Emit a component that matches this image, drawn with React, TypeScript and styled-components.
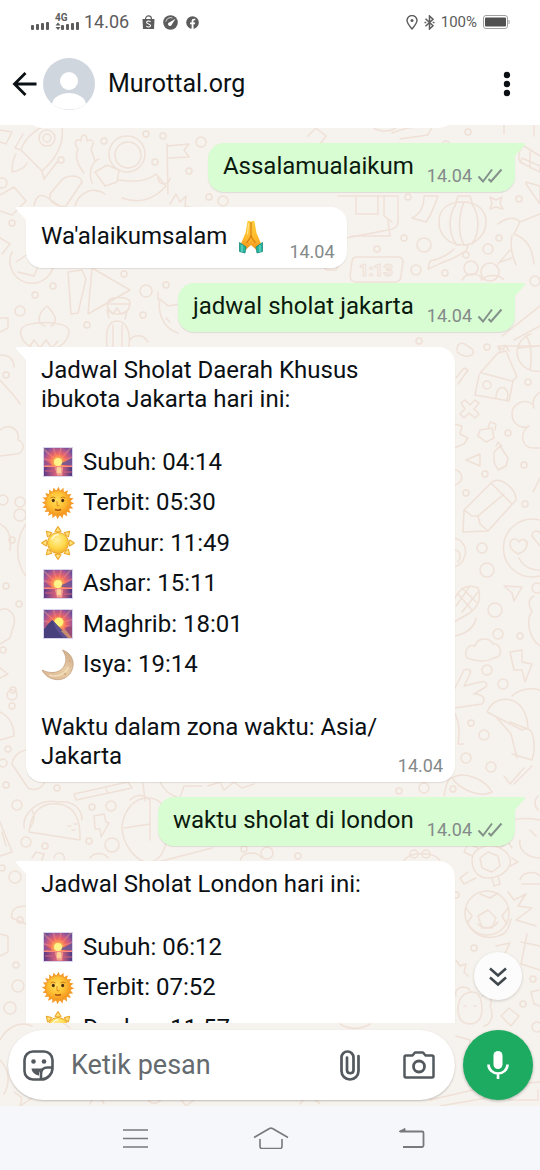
import React from "react";
import styled, { createGlobalStyle, css } from "styled-components";

const GlobalStyle = createGlobalStyle`
  *, *::before, *::after { box-sizing: border-box; }
  body { margin: 0; background: #ffffff; font-family: Roboto, "Liberation Sans", sans-serif; color: #0b1014; }
  button, input { font: inherit; color: inherit; border: 0; padding: 0; background: none; }
  h1, p, ul { margin: 0; padding: 0; }
  ul { list-style: none; }
  svg { display: block; flex: none; }
`;

const Screen = styled.div`
  display: flex;
  flex-direction: column;
  height: 100vh;
  overflow: hidden;
`;

const StatusBar = styled.div`
  display: flex;
  align-items: center;
  justify-content: space-between;
  height: 44px;
  flex: none;
  padding: 0 30px;
  color: #5c5c5c;
`;

const StatusGroup = styled.div<{ $gap: number }>`
  display: flex;
  align-items: center;
  gap: ${(p) => p.$gap}px;
`;

const AppIcons = styled(StatusGroup)`
  margin-left: 8px;
`;

const StatusText = styled.span<{ $size: number }>`
  font-size: ${(p) => p.$size}px;
  line-height: 20px;
`;

const Header = styled.header`
  display: flex;
  align-items: center;
  height: 81px;
  flex: none;
  padding: 0 25px 2px 12px;
`;

const IconButton = styled.button`
  display: flex;
  align-items: center;
  justify-content: center;
  flex: none;
  cursor: pointer;
`;

const AvatarSvg = styled.svg`
  margin-left: 5px;
`;

const Title = styled.h1`
  flex: 1;
  margin-left: 13px;
  font-size: 25px;
  line-height: 30px;
  font-weight: 400;
`;

const Chat = styled.main`
  position: relative;
  display: flex;
  flex-direction: column;
  flex: 1;
  min-height: 0;
  background: #f6f2ed;
`;

const WallpaperSvg = styled.svg`
  position: absolute;
  inset: 0;
  width: 100%;
  height: 100%;
`;

const Messages = styled.section`
  position: relative;
  display: flex;
  flex-direction: column;
  gap: 15px;
  flex: 1;
  min-height: 0;
  overflow: hidden;
  padding: 0 25px 0 26px;
`;

const Earlier = styled.div`
  display: flex;
  align-items: flex-end;
  flex: none;
  width: calc(100% - 60px);
  height: 3px;
  overflow: hidden;
`;

const EarlierBubble = styled.div`
  flex: 1;
  height: 40px;
  border-radius: 16px;
  background: #ffffff;
`;

const Bubble = styled.article<{ $out?: boolean; $wide?: boolean }>`
  position: relative;
  display: flex;
  align-items: flex-end;
  justify-content: space-between;
  gap: 13px;
  flex: none;
  padding: 9px 12px 6px 15px;
  box-shadow: 0 1px 1px rgba(60, 50, 40, 0.12);
  ${(p) =>
    p.$out
      ? css`
          align-self: flex-end;
          background: #d8fdd2;
          color: #0a1a0e;
          border-radius: 16px 0 16px 16px;
        `
      : css`
          align-self: flex-start;
          background: #ffffff;
          border-radius: 0 16px 16px 16px;
        `}
  ${(p) => p.$wide && "width: calc(100% - 60px);"}
`;

const TailSvg = styled.svg<{ $out?: boolean }>`
  position: absolute;
  top: 0;
  ${(p) => (p.$out ? "right: -10px; transform: scaleX(-1);" : "left: -10px;")}
`;

const Body = styled.div`
  margin-bottom: 5px;
  font-size: 24px;
  line-height: 29px;
`;

const EmojiLine = styled.p`
  display: flex;
  align-items: center;
  gap: 7px;
  height: 41px;
  margin-right: 8px;
`;

const Times = styled.ul`
  display: grid;
  grid-template-rows: repeat(6, 1fr);
  height: 243px;
  margin: 28px 0;
`;

const TimeRow = styled.li`
  display: flex;
  align-items: center;
  gap: 8px;
`;

const Stamp = styled.footer`
  display: flex;
  align-items: center;
  gap: 5px;
  flex: none;
  font-size: 18px;
  line-height: 20px;
  color: #84898a;
`;

const ScrollButton = styled(IconButton)`
  position: absolute;
  right: 18px;
  bottom: 106px;
  width: 48px;
  height: 48px;
  border-radius: 50%;
  background: #fbfcfb;
  color: #3f474c;
  box-shadow: 0 1px 3px rgba(60, 50, 40, 0.2);
`;

const Composer = styled.form`
  position: relative;
  display: flex;
  gap: 8px;
  flex: none;
  padding: 7px 7px 6px 8px;
`;

const InputPill = styled.div`
  display: flex;
  align-items: center;
  flex: 1;
  min-width: 0;
  height: 70px;
  padding: 0 20px 0 15px;
  border-radius: 35px;
  background: #ffffff;
  color: #53595e;
  box-shadow: 0 1px 2px rgba(60, 50, 40, 0.28);
`;

const MessageInput = styled.input`
  flex: 1;
  min-width: 0;
  margin: 0 17px;
  font-size: 27px;
  line-height: 32px;
  outline: none;
  &::placeholder {
    color: #646a6e;
    opacity: 1;
  }
`;

const PillActions = styled.div`
  display: flex;
  align-items: center;
  gap: 42px;
`;

const MicButton = styled(IconButton)`
  width: 70px;
  height: 70px;
  border-radius: 50%;
  background: #1dab61;
  color: #ffffff;
  box-shadow: 0 1px 3px rgba(40, 50, 40, 0.35);
`;

const NavBar = styled.nav`
  display: flex;
  align-items: center;
  justify-content: space-between;
  height: 64px;
  flex: none;
  padding: 0 115px 0 122px;
  background: #f6f7fa;
  color: #77797c;
`;

/* ---------- status icons ---------- */

const bars = (x: number) =>
  [0, 1, 2, 3].map((i) => (
    <rect key={i} x={x + i * 5} y={12 - i} width="3" height={5 + i} rx="1" />
  ));

const Signal = () => (
  <svg width="49" height="18" viewBox="-1 0 49 18" fill="currentColor" aria-hidden="true">
    {bars(0)}
    <text x="24" y="8" fontSize="10" fontWeight="700" fontFamily="Roboto, sans-serif">4G</text>
    {bars(30)}
    <path d="M24.500 12.500l2.500-3 2.500 3zM24.500 14l2.500 3 2.500-3z" />
  </svg>
);

const ShopIcon = () => (
  <svg width="13" height="15" viewBox="0 0 13 15" aria-hidden="true">
    <path d="M3.500 4.500C3.500-.3 9.500-.3 9.500 4.500" fill="none" stroke="currentColor" strokeWidth="1.200" />
    <path d="M.5 4h12L12 14H1z" fill="currentColor" />
    <path d="M8.600 6.800C7 5.500 4.500 6 4.600 7.500c.1 1.700 4 1.200 4 3 0 1.700-2.800 1.900-4.300.6" fill="none" stroke="#fff" strokeWidth="1.100" />
  </svg>
);

const GaugeIcon = () => (
  <svg width="15" height="15" viewBox="0 0 15 15" aria-hidden="true">
    <circle cx="7.500" cy="7.500" r="7.300" fill="currentColor" />
    <path d="M2.800 6.500A5 5 0 0 1 9.500 3" fill="none" stroke="#fff" strokeWidth=".8" />
    <path d="M12.500 3.800L8.700 9.800a1.900 1.900 0 1 1-2-2.500z" fill="#fff" />
  </svg>
);

const FacebookIcon = () => (
  <svg width="13" height="13" viewBox="0 0 13 13" aria-hidden="true">
    <circle cx="6.500" cy="6.500" r="6.300" fill="currentColor" />
    <path d="M5.600 13V8.300H4V6.500h1.600V5.200c0-1.700 1-2.500 2.500-2.500l1.200.1v1.500h-.8c-.8 0-1 .4-1 1v1.200h1.700l-.3 1.800H7.500V13z" fill="#fff" />
  </svg>
);

const PinIcon = () => (
  <svg width="12" height="15" viewBox="0 0 12 15" fill="none" stroke="currentColor" strokeWidth="1.400" aria-hidden="true">
    <path d="M6 14C3 10.500 1 8 1 5.600a5 5 0 0 1 10 0C11 8 9 10.500 6 14z" />
    <circle cx="6" cy="5.500" r="1.500" fill="currentColor" stroke="none" />
  </svg>
);

const BluetoothIcon = () => (
  <svg width="11" height="15" viewBox="0 0 11 15" fill="none" stroke="currentColor" strokeWidth="1.500" aria-hidden="true">
    <path d="M1.500 3.800L9 10.800 5.500 14V1L9 4.200l-7.500 7" />
    <path d="M.5 7.500h1.800M8.700 7.500h1.800" />
  </svg>
);

const BatteryIcon = () => (
  <svg width="27" height="14" viewBox="0 0 27 14" aria-hidden="true">
    <rect x=".5" y=".5" width="24" height="13" rx="2.500" fill="none" stroke="#a0a0a0" />
    <rect x="2" y="2.500" width="21" height="9" rx="1" fill="#505050" />
    <path d="M26 5v4" stroke="#a0a0a0" />
  </svg>
);

/* ---------- app icons ---------- */

const BackIcon = () => (
  <svg width="26" height="26" viewBox="0 0 26 26" fill="none" stroke="#0b1014" strokeWidth="2.800" aria-hidden="true">
    <path d="M24.500 13H3M13.500 2L2.500 13l11 11" />
  </svg>
);

const Avatar = () => (
  <AvatarSvg width="52" height="52" viewBox="0 0 52 52" aria-hidden="true">
    <clipPath id="avatar"><circle cx="26" cy="26" r="26" /></clipPath>
    <g clipPath="url(#avatar)">
      <rect width="52" height="52" fill="#cfd6dd" />
      <circle cx="26" cy="23" r="9" fill="#fff" />
      <path d="M9 46c1-7 9-11 17-11s16 4 17 11c-4 3.500-10 5.500-17 5.500S13 49.500 9 46z" fill="#fff" />
    </g>
  </AvatarSvg>
);

const DotsIcon = () => (
  <svg width="16" height="28" viewBox="0 0 16 28" fill="#0b1014" aria-hidden="true">
    <circle cx="8" cy="5" r="3.200" />
    <circle cx="8" cy="14" r="3.200" />
    <circle cx="8" cy="23" r="3.200" />
  </svg>
);

const ChecksIcon = () => (
  <svg width="26" height="18" viewBox="0 0 26 18" fill="none" stroke="#83918a" strokeWidth="2" aria-hidden="true">
    <path d="M1.500 9.500l4.500 5L15 2.500" />
    <path d="M11.500 12l2.500 2.500L24.500 2.500" />
  </svg>
);

const Tail = ({ out }: { out?: boolean }) => (
  <TailSvg $out={out} width="11" height="16" viewBox="0 0 11 16" aria-hidden="true">
    <path d="M11 0H1.500C0 0-.4 1.400.6 2.400L10 13v3h1z" fill={out ? "#d8fdd2" : "#ffffff"} />
  </TailSvg>
);

const StickerIcon = () => (
  <svg width="31" height="31" viewBox="0 0 31 31" fill="none" stroke="currentColor" strokeWidth="2.600" strokeLinejoin="round" aria-hidden="true">
    <path d="M10 1.500h11a8.500 8.500 0 0 1 8.500 8.500v8c0 6-5 11.500-11.500 11.500h-8A8.500 8.500 0 0 1 1.500 21V10A8.500 8.500 0 0 1 10 1.500z" />
    <path d="M29.500 17.500h-5c-4 0-6.500 2.500-6.500 6.500v5.500" />
    <path d="M8.500 18.500h13c-4 1-5.500 3.500-5.500 7-4-.5-7-3-7.500-7z" fill="currentColor" stroke="none" />
    <circle cx="10.500" cy="11.500" r="2.300" fill="currentColor" stroke="none" />
    <circle cx="21" cy="11.500" r="2.300" fill="currentColor" stroke="none" />
  </svg>
);

const ClipIcon = () => (
  <svg width="22" height="32" viewBox="0 0 22 32" fill="none" stroke="currentColor" strokeWidth="2.700" strokeLinecap="round" aria-hidden="true">
    <path d="M19.500 7v15a8.500 8.500 0 0 1-17 0V8.500a6 6 0 0 1 12 0v13a3.300 3.300 0 0 1-6.500 0V8.500" />
  </svg>
);

const CameraIcon = () => (
  <svg width="32" height="30" viewBox="0 0 32 30" fill="none" stroke="currentColor" strokeWidth="2.500" strokeLinejoin="round" aria-hidden="true">
    <path d="M3 5.500h6.500l2.500-3h8l2.500 3H29a1.500 1.500 0 0 1 1.500 1.500v19a1.500 1.500 0 0 1-1.500 1.500H3A1.500 1.500 0 0 1 1.500 26V7A1.500 1.500 0 0 1 3 5.500z" />
    <circle cx="16" cy="16.500" r="5.500" strokeWidth="2.800" />
  </svg>
);

const MicIcon = () => (
  <svg width="24" height="32" viewBox="0 0 24 32" fill="none" aria-hidden="true">
    <rect x="7.500" y="2" width="9" height="18" rx="4.500" fill="currentColor" />
    <path d="M2.500 15.500a9.500 9 0 0 0 19 0M12 24.500V30" stroke="currentColor" strokeWidth="2.600" />
  </svg>
);

const DoubleDownIcon = () => (
  <svg width="20" height="22" viewBox="0 0 20 22" fill="none" stroke="currentColor" strokeWidth="2.500" aria-hidden="true">
    <path d="M2 3.500l8 7L18 3.500M2 12.500l8 7 8-7" />
  </svg>
);

const MenuIcon = () => (
  <svg width="27" height="20" viewBox="0 0 27 20" stroke="currentColor" strokeWidth="1.600" aria-hidden="true">
    <path d="M1 2h25M1 10.500h25M1 19h25" />
  </svg>
);

const HomeIcon = () => (
  <svg width="36" height="22" viewBox="0 0 36 22" fill="none" stroke="currentColor" strokeWidth="1.600" strokeLinejoin="round" aria-hidden="true">
    <path d="M1 10.500L16.500 1.500q1.500-.8 3 0L35 10.500" />
    <path d="M7 12v7.500a2 2 0 0 0 2 2h18a2 2 0 0 0 2-2V12" />
  </svg>
);

const ReturnIcon = () => (
  <svg width="33" height="22" viewBox="-6 1 33 22" fill="none" stroke="currentColor" strokeWidth="1.800" aria-hidden="true">
    <path d="M2 5.500h22a1.500 1.500 0 0 1 1.500 1.500v12.500a1.500 1.500 0 0 1-1.500 1.500H5" />
    <path d="M1 5.500L7 2.500v3z" fill="currentColor" strokeWidth="1" />
  </svg>
);

/* ---------- emoji ---------- */

const RAYS_12 = Array.from({ length: 12 }, (_, i) => i * 30);
const RAYS_8 = Array.from({ length: 8 }, (_, i) => i * 45);
const RAYS_20 = Array.from({ length: 20 }, (_, i) => i * 18);

const EmojiPaints = () => (
  <svg width="0" height="0" aria-hidden="true">
    <defs>
      <radialGradient id="sky" cx=".5" cy=".5" r=".62">
        <stop offset="0" stopColor="#fff27a" />
        <stop offset=".22" stopColor="#ffb04a" />
        <stop offset=".48" stopColor="#ee6663" />
        <stop offset=".8" stopColor="#a65694" />
        <stop offset="1" stopColor="#665098" />
      </radialGradient>
      <linearGradient id="sea" x1="0" x2="1">
        <stop offset="0" stopColor="#5c3a86" />
        <stop offset=".4" stopColor="#d2607c" />
        <stop offset=".65" stopColor="#d2607c" />
        <stop offset="1" stopColor="#4a3a84" />
      </linearGradient>
      <radialGradient id="sun" cx=".45" cy=".4" r=".6">
        <stop offset="0" stopColor="#ffe05e" />
        <stop offset=".5" stopColor="#ffc437" />
        <stop offset="1" stopColor="#f3931c" />
      </radialGradient>
      <radialGradient id="ball" cx=".45" cy=".35" r=".65">
        <stop offset="0" stopColor="#fff0a0" />
        <stop offset=".6" stopColor="#ffd94c" />
        <stop offset="1" stopColor="#f2b02c" />
      </radialGradient>
      <linearGradient id="moon" x1="0" y1="1" x2="1" y2="0">
        <stop offset="0" stopColor="#d9b58e" />
        <stop offset=".55" stopColor="#e9cda6" />
        <stop offset="1" stopColor="#c9a583" />
      </linearGradient>
      <linearGradient id="hand" x1="0" y1="0" x2="0" y2="1">
        <stop offset="0" stopColor="#ffcf3f" />
        <stop offset=".6" stopColor="#ffb92b" />
        <stop offset="1" stopColor="#ee8f1c" />
      </linearGradient>
      <clipPath id="tile"><rect x="3" y="3" width="28" height="28" /></clipPath>
    </defs>
  </svg>
);

const Tile = ({ children }: { children: React.ReactNode }) => (
  <svg width="34" height="34" viewBox="0 0 34 34" aria-hidden="true">
    <rect x="2" y="2" width="30" height="30" fill="#d9d3ec" />
    <g clipPath="url(#tile)">
      <rect x="3" y="3" width="28" height="28" fill="url(#sky)" />
      {RAYS_12.map((a) => (
        <path key={a} d="M17 17L15.500-6h3z" fill="#ff9a86" opacity=".38" transform={`rotate(${a + 12} 17 17)`} />
      ))}
      {children}
    </g>
  </svg>
);

const SeaSunrise = () => (
  <Tile>
    <path d="M31 13c-3 1-4 3-8 4-2 .5-3 2-4 3h12z" fill="#6a5596" opacity=".85" />
    <path d="M3 15c3 1 5 3 8 5H3z" fill="#8a4f8e" opacity=".7" />
    <circle cx="17" cy="17" r="4" fill="#fff48a" />
    <rect x="3" y="21" width="28" height="10" fill="url(#sea)" />
    <path d="M3 21.500h28" stroke="#ff8d7c" />
    <path d="M14 22.500h8l-1 8h-5z" fill="#ffb894" opacity=".75" />
    <path d="M16 22h4v6h-4z" fill="#ffe6a0" opacity=".7" />
    <path d="M4 26h8M23 27h8" stroke="#d8607c" />
  </Tile>
);

const MountainSunrise = () => (
  <Tile>
    <circle cx="18" cy="15" r="4.500" fill="#fff27a" />
    <path d="M31 19l-5 1-5 5 4 6h6z" fill="#9a4c78" />
    <path d="M3 22l4-5 3-3 1.500-1 4.500 5 5 5 7 8H3z" fill="#47407c" />
    <path d="M11.500 13l4.500 5 5 5 7 8h-6l-7-9z" fill="#5d5090" />
    <path d="M20 24l4-2 7 9h-4z" fill="#c98a72" />
  </Tile>
);

const SunFace = () => (
  <svg width="34" height="34" viewBox="0 0 34 34" aria-hidden="true">
    {RAYS_20.map((a) => (
      <path key={a} d="M14.500 6L17.600.8 19.500 6z" fill="#f59a28" transform={`rotate(${a} 17 17)`} />
    ))}
    <circle cx="17" cy="17" r="12.500" fill="url(#sun)" stroke="#f6a02b" />
    <path d="M9.500 12q3-2 5 0M19.500 12q2-2 5 0" fill="none" stroke="#c97a15" />
    <ellipse cx="12.300" cy="14.500" rx="1.500" ry="1.800" fill="#4a2d12" />
    <ellipse cx="21.700" cy="14.500" rx="1.500" ry="1.800" fill="#4a2d12" />
    <path d="M16 15v4.500q1 1 2.500 0" fill="none" stroke="#e08a1c" />
    <path d="M14 23.500q3 1.500 6 0" fill="none" stroke="#a85410" strokeWidth="1.400" />
  </svg>
);

const Sun = () => (
  <svg width="34" height="34" viewBox="0 0 34 34" aria-hidden="true">
    {RAYS_8.map((a) => (
      <path key={a} d="M14 5.200L17 .6l3 4.600q-3 1.400-6 0z" fill="#ffe27a" stroke="#eda92e" strokeWidth="1.100" strokeLinejoin="round" transform={`rotate(${a} 17 17)`} />
    ))}
    <circle cx="17" cy="17" r="10.500" fill="url(#ball)" stroke="#e9a62a" strokeWidth="1" />
    <path d="M11 13q2-4 6-4.300" fill="none" stroke="#fff8cf" strokeWidth="1.500" strokeLinecap="round" />
  </svg>
);

const Moon = () => (
  <svg width="34" height="34" viewBox="0 0 34 34" aria-hidden="true">
    <path d="M21.500 2c8 2.500 12.500 10.500 10 18.500-2.500 8.500-11 13-19.500 10.500C6.500 29.500 2.800 26 1 22c8 4 17 3.500 21.500-3 3.500-5.500 3-11-1-17z" fill="url(#moon)" stroke="#c3a183" strokeWidth=".8" />
    <path d="M8 27c8 2.500 16.500-.5 19.500-8" fill="none" stroke="#f6e3c4" strokeWidth="1.500" opacity=".8" />
    <circle cx="28.500" cy="13" r="1.200" fill="#d3b18a" />
    <circle cx="24" cy="26" r="1.300" fill="#d3b18a" />
  </svg>
);

const Pray = () => (
  <svg width="34" height="34" viewBox="0 0 34 34" aria-hidden="true">
    <path d="M13.500 1.200c1.200-1 2.500-.4 3.500.8 1-1.200 2.300-1.800 3.500-.8L22.500 13l4.500 10.500-4.500 6.500-5.500-5-5.500 5L7 23.500 11.500 13z" fill="url(#hand)" />
    <path d="M17 2v12.500c0 3-2.500 6-4.500 8.500M17 14.500c0 3 2.500 6 4.500 8.500" fill="none" stroke="#d67f12" strokeWidth="1.200" />
    <path d="M14.500 3.500l-1 11" stroke="#ffe28a" strokeWidth="1.200" />
    <path d="M5.500 22.500l6.500 4.500-1 6L5.500 31.500z" fill="#27b5a0" stroke="#168877" strokeWidth=".8" />
    <path d="M28.500 22.500L22 27l1 6 5.500-1.500z" fill="#27b5a0" stroke="#168877" strokeWidth=".8" />
    <path d="M8 25v7M26 25v7" stroke="#7fded0" />
  </svg>
);

/* ---------- doodle wallpaper ---------- */

const DOTS: [number, number, number][] = [
  [61, 160, 3], [104, 141, 3], [146, 134, 3], [163, 136, 3], [155, 162, 3], [189, 171, 3], [201, 142, 5], [209, 197, 3],
  [223, 201, 5], [2, 183, 5], [12, 223, 3], [404, 238, 3], [424, 245, 7], [377, 249, 3], [416, 270, 5], [445, 273, 3],
  [466, 255, 3], [488, 249, 5], [499, 238, 3], [519, 199, 3], [408, 197, 3], [446, 145, 4], [468, 132, 3], [471, 268, 7], [490, 272, 9],
  [535, 281, 5], [124, 274, 3], [146, 291, 6], [53, 286, 3], [35, 295, 3], [20, 311, 5], [166, 285, 3], [143, 315, 3],
  [87, 325, 3], [419, 341, 3], [487, 347, 3], [528, 382, 3], [508, 433, 3], [524, 465, 3], [485, 474, 3], [466, 493, 3],
  [525, 504, 3], [482, 548, 5], [487, 570, 7], [495, 610, 7], [537, 588, 5], [498, 634, 5], [520, 636, 3], [487, 670, 5],
  [503, 684, 5], [471, 723, 3], [484, 735, 5], [466, 758, 5], [491, 767, 5], [453, 789, 3], [424, 788, 5], [399, 791, 3],
  [6, 586, 3], [19, 604, 3], [6, 375, 3], [3, 500, 5], [20, 502, 5], [20, 515, 6], [12, 695, 5], [3, 650, 3], [13, 690, 3], [12, 706, 3],
  [8, 749, 3], [3, 763, 4], [6, 785, 3], [57, 788, 3], [17, 805, 5], [92, 807, 3], [111, 806, 5], [26, 842, 5], [45, 846, 3],
  [89, 841, 3], [112, 845, 7], [244, 849, 3], [267, 853, 6], [298, 856, 3], [15, 877, 6], [2, 868, 3], [16, 965, 3], [18, 986, 6], [10, 1008, 6],
  [474, 948, 3], [533, 979, 3], [523, 1004, 3], [537, 1027, 5], [456, 895, 3], [20, 920, 3], [12, 540, 3],
];

const DOODLES: string[] = [
  /* rocket */
  "M33 133c8-8 20-8 29-6 2 16-4 30-20 44L21 150c2-7 6-12 12-17zM21 150l-6-2 8-14M16 154c-4 6-4 12-4 18 6-1 12-3 15-9M42 171l2 8 14-18",
  /* astronaut */
  "M84 173c-9-12-8-20-6-24-5-6-2-12 3-8 0-8 6-8 6 0 6-3 8 1 4 8l4 12M92 183c-4-10 0-22 7-24M95 172l12-7 12 5-2 12-12 4zM118 180c16 2 28 2 38-6l10 12c-12 14-28 18-44 12M75 206c4-14 18-20 30-12M60 182c6-8 20-8 22 0l-16 24c-8 2-18-4-16-12zM34 206c2-12 8-12 14-8l12 8",
  "M109 154a18 18 0 1 0 36 0 18 18 0 1 0-36 0M115 155a13 13 0 1 0 26 0 13 13 0 1 0-26 0M39 138a8 8 0 1 0 16 0 8 8 0 1 0-16 0M43 138a4 4 0 1 0 8 0 4 4 0 1 0-8 0",
  /* flag */
  "M167 146l22-2-5 6 5 7-21 1M167 144l1 50M158 178a6 6 0 1 0 12 0M0 130l12 2-6 12-6-2",
  "M0 195l14-8 12 14-14 14-12-4M170 204l6-10 4 8 6-6-1 10 8 2",
  /* melon */
  "M12 252a22 22 0 1 0 40 0M16 262l12-8 12 8-6 14-16-4M0 238l10 6-8 10",
  /* party hats */
  "M68 272l3 42 7-1 8-34-4-9zM88 314l4-46 38 22zM108 302c2-6 20-6 22 0 0 8-4 12-12 12s-12-6-10-12zM109 304h21",
  /* cupcake */
  "M21 330c2-10 46-10 48 0 0 10-8 20-24 20s-26-10-24-20zM45 326c-8-2-8-12 2-20 8 8 12 16 4 20M30 346l4-6 6 8 6-8 6 8 6-7M0 318h8v10l-8 4",
  /* cactus */
  "M107 347c-2-18 2-26 10-26s14 8 12 26M113 347v-22M122 347v-22M109 318l-2-8 6 4 4-6 4 6 6-3-2 8M130 340c4-6 14-6 18 2",
  /* cat */
  "M178 333c-18-6-20-24-18-34l8 7 12-2 8-8M166 318l4 4M158 300v-8",
  /* camera strap */
  "M338 196h60v26c0 4-4 8-10 8l-42 8M356 196v18h22v-18M352 236h38l-2-16M384 196v20l8 6",
  "M424 196c0 10-4 18-12 22l14 4c6-8 8-16 12-26z",
  /* lantern */
  "M439 222c0-14 10-20 24-20s23 8 23 20-10 23-23 23-24-9-24-23zM456 204c-8 12-8 28 0 40M464 202c-6 14-6 32 0 43M472 204c8 12 8 28 0 40M456 202l2-6h12l2 6M456 245h12l-2 6-14 8c-8 2-14 6-24 10l2-8c10-2 18-6 24-12",
  /* sparkle */
  "M490 197l6 3 6-3-2 6 3 6-7-2-6 2 2-6z",
  /* books */
  "M524 146l16 10M520 162l20 10v-6l-18-8zM524 146c-6 4-6 12-4 16M526 184l14 20v-18l-14-4zM504 134v-10h30v12M530 152v16",
  /* palm */
  "M498 224c8-6 16-8 22-2M520 222l-6 12c10 4 18 10 20 30M512 235c-2 12 0 20 4 30M510 250l-12 14M520 222l20-8M500 262l12-4",
  /* clock */
  "M352 262c0-3 2-5 5-5h40c4 0 6 2 6 5l-2 14c0 4-3 6-7 6h-38c-4 0-6-3-6-6zM320 262l6 8h10l4-8",
  "M462 280c4-8 18-8 20 0 4-6 18-6 22 0",
  /* rays */
  "M502 336l38-30M514 340l26-14M500 346h40",
  "M392 133c10-4 24-8 40-6l-4 8-28 4M308 136l8-8 10 8-6 8M370 122c2 10 20 12 28 4",
  /* basketball */
  "M517 353a20 20 0 0 0 23 18M518 348l22-2M526 336c6 8 6 24 4 34M517 353a20 20 0 0 1 14-19",
  /* house */
  "M480 373l18-20 8-2 11 26-5 4-30-8zM479 375l-4 20 34 6 4-20M496 398c0-12 10-14 12-4l-1 7M483 385a4 4 0 1 0 8 0 4 4 0 1 0-8 0M500 352l-2-6 5 4 2-5 4 6",
  "M457 350c0-6 4-8 8-6 4 4 10 4 8 10-4 4-12 2-16-2M456 378l8-10 4 2-10 14",
  /* plus */
  "M461 403l4-3 5 5 5-5 4 3-5 6 5 5-4 4-6-5-5 5-4-4 5-5zM454 424l8 2-2 8 8 4-4 6-10 4",
  /* clover */
  "M532 404c-8-6-20 0-20 10s10 16 17 12c-10 6-8 22 4 22h7M540 392c-6 4-8 10-6 16",
  /* bottles */
  "M480 430l12-2 2 10-8 4-8-6zM488 428l2-6 6 2-1 6M494 452l6-6 8 12-2 8-8 4-4-8zM496 446l2-4 4 4M466 460l14-6v12zM454 470c6 0 10 6 6 12l-6 4",
  /* pencil */
  "M464 510l28-28c8-6 24 6 24 18l-28 31-25 1zM464 510l8 6 6 0 2 8 8 7M478 516l26-22M492 484l20 20M533 492l7-14",
  /* heart-eyes face */
  "M540 520a29 29 0 1 0 0 56M510 543c2-6 8-4 9-1 2-4 9-3 8 3-1 5-6 8-9 9-5-3-9-6-8-11zM540 546l-8-10c0-6 6-6 8-3M519 558c4 8 12 12 21 12M454 538c10 2 14 12 10 20-2 6-6 8-10 9M454 550c6 0 8 6 4 12",
  /* corn */
  "M454 600c6-14 16-16 24-12 4 10 0 20-10 26l-14 8M462 588l14 14M458 594l14 16M470 586l-14 20M478 592l-16 20M454 636c12-2 20-8 22-18",
  "M504 586l18 1-8 14-2-8zM534 596c-8 4-4 12-2 16-6 6-4 26 8 34",
  /* cloud */
  "M467 658c-4-8 2-14 8-12 2-8 14-10 18-2 8-2 12 14 0 14-8 6-20 2-26 0zM510 652l12-2 0 12 10 2-7 18-3-12-8 0z",
  /* hand */
  "M454 690l10-20c4-2 8 0 6 4l-6 12 16-4c8-2 8 4 4 6l-10 6c10 0 12 6 8 10l-28 4",
  /* mushroom */
  "M487 712c8-20 40-18 41 16l-6 2zM497 718l14 16 6 24M510 722l20 8c4 4 6 20 2 30l-20-6M512 696c8-8 20-8 28-6M454 712c6 10 6 20 4 32h6",
  /* racket */
  "M452 778c12-8 34 2 40 14-12 6-32-2-40-14zM504 776l6 8 14-16M514 784l18-18M444 796c2-12 4-18 8-18M538 796c-4 4-4 10 0 14",
  /* taco */
  "M29 832c2-22 14-30 30-28 14 2 22 12 21 36zM24 828c-2-16 16-30 34-26 14-2 24 6 24 18M68 826h3M74 824h3M72 830h3M32 810c4 6 2 12-2 18",
  "M94 816l10-2 2 8 3 1-8 14-1-8-5 0zM74 794l54-12 4 6-56 12zM106 789l2 4",
  /* mitten */
  "M130 800c6-6 14-6 20 0v40M122 826c2-14 10-28 26-28s22 16 20 34-8 30-20 30-26-18-26-36zM124 828l26-4M143 783l2 18M160 782c4 8 10 14 20 16l4-12h18",
  /* party strip */
  "M208 786l12-4 4 8 10-8 8 6 12-4M158 862l54-14M240 862c0-10 16-12 22-4M404 861c4-10 32-10 36 0M410 854a4 4 0 1 0 8 0 4 4 0 1 0-8 0M422 854a4 4 0 1 0 8 0 4 4 0 1 0-8 0",
  "M0 822l12 30-12 4M2 832l4 14M32 858l4-6 8 2-2 6M54 858c2-8 12-6 10 2M90 858c4-6 14-6 18 0",
  /* turtle */
  "M472 860c0-10 12-16 22-14s18 10 16 18-12 14-22 14-16-8-16-18zM480 858l8-6 10 4 2 10-8 6-10-4zM472 856l-8-4 4-8 10 4M468 872l-8 6 4 6 12-6M492 878l2 8 6-2-2-8M512 858l6 4-8 4M500 848l8-6 4 6",
  "M514 820c4-2 16-2 26 0M520 840c-2 10 8 18 20 18M530 830l6 6M520 880c2-8 14-10 20-4M522 884h18",
  /* football */
  "M465 913a22 22 0 1 0 44 0 22 22 0 1 0-44 0M478 916l10-6 8 8-4 10h-10zM480 894l10 4 8-5M466 908l6 8-4 6M508 908l-6 8 5 8M508 892l6 8 12-6-8 12 14 2-16 12 20 6",
  /* donut */
  "M467 921c4 14 20 20 34 14 6-2 8-8 10-16M478 924c6 6 16 4 20-2M527 934l-6 30 19 6M521 942l19 4M496 946l14-3-6 12M456 960l4 6 6-2-2 8 4 4M539 990l-8 2 3 12 6 2",
  /* teddy */
  "M458 1010c0-12 6-18 14-18s10 8 10 18-6 14-12 14-12-4-12-14zM456 996c-2-8 8-12 14-6M482 996c6-2 12 2 8 10M490 1006c4 8 2 18-6 20M464 1006h2M474 1006h2M501 1016l8-8 10 8-8 10z",
  /* bottom band */
  "M0 1040c6-12 20-20 32-14M14 1092l8 6-2 8 12-8M0 1060c10 10 10 24 4 34M62 1022l8 6M90 1104c4-10 10-10 14 0M146 1098c8 10 14 4 18-2M180 1098l6 8 8-6M300 1104c4-8 12-8 20 0M340 1024c10 6 20 6 30 0M430 1100l60-14 50-4M440 1106l70-12M456 1036l14 4-2 20M508 1100h30v-10",
  "M0 380c8 10 14 14 20 24M0 430c10-8 20 0 18 10 8 2 6 14-2 14l-16 2M0 355c10 0 14 4 14 12M26 524c-12 16-10 40 0 52M0 524c8 4 12 12 10 26M0 610c8-4 16 4 14 14l-4 14-10 6M0 668l8 6-8 4M0 712c8 4 14 12 14 24l-14 4M26 750c-10 2-14 10-14 14l16 24c8 4 14 0 18-8M26 906c-10 0-16 4-14 12l14 6M0 934l8 2v16l-8 4",
];

const Wallpaper = () => (
  <WallpaperSvg viewBox="0 125 540 981" preserveAspectRatio="xMidYMin slice" fill="none" stroke="#efe1d7" strokeWidth="1.500" strokeLinejoin="round" strokeLinecap="round" aria-hidden="true">
    {DOTS.map(([x, y, r]) => (
      <circle key={`${x}-${y}`} cx={x} cy={y} r={r} />
    ))}
    {DOODLES.map((d) => (
      <path key={d} d={d} />
    ))}
    <text x="359" y="276" fontSize="17" fontWeight="700" fontFamily="Roboto, sans-serif" strokeWidth="1">1:13</text>
  </WallpaperSvg>
);

/* ---------- chat ---------- */

type Slot = { name: string; time: string; Icon: React.FC };

const schedule = (times: string[]): Slot[] => {
  const names = ["Subuh", "Terbit", "Dzuhur", "Ashar", "Maghrib", "Isya"];
  const icons = [SeaSunrise, SunFace, Sun, SeaSunrise, MountainSunrise, Moon];
  return times.map((time, i) => ({ name: names[i], time, Icon: icons[i] }));
};

const JAKARTA = schedule(["04:14", "05:30", "11:49", "15:11", "18:01", "19:14"]);
const LONDON = schedule(["06:12", "07:52", "11:57"]);

const TimeList = ({ slots }: { slots: Slot[] }) => (
  <Times>
    {slots.map(({ name, time, Icon }) => (
      <TimeRow key={name}>
        <Icon />
        <span>{`${name}: ${time}`}</span>
      </TimeRow>
    ))}
  </Times>
);

const Outgoing = ({ text }: { text: string }) => (
  <Bubble $out>
    <Tail out />
    <Body><p>{text}</p></Body>
    <Stamp><time>14.04</time><ChecksIcon /></Stamp>
  </Bubble>
);

export default function App() {
  return (
    <Screen>
      <GlobalStyle />
      <StatusBar>
        <StatusGroup $gap={5}>
          <Signal />
          <StatusText $size={18}>14.06</StatusText>
          <AppIcons $gap={8}>
            <ShopIcon />
            <GaugeIcon />
            <FacebookIcon />
          </AppIcons>
        </StatusGroup>
        <StatusGroup $gap={6}>
          <PinIcon />
          <BluetoothIcon />
          <StatusText $size={15}>100%</StatusText>
          <BatteryIcon />
        </StatusGroup>
      </StatusBar>

      <Header>
        <IconButton type="button" aria-label="Kembali">
          <BackIcon />
        </IconButton>
        <Avatar />
        <Title>Murottal.org</Title>
        <IconButton type="button" aria-label="Opsi lainnya">
          <DotsIcon />
        </IconButton>
      </Header>

      <Chat>
        <Wallpaper />
        <EmojiPaints />
        <Messages>
          <Earlier><EarlierBubble /></Earlier>
          <Outgoing text="Assalamualaikum" />
          <Bubble>
            <Tail />
            <Body>
              <EmojiLine>Wa'alaikumsalam <Pray /></EmojiLine>
            </Body>
            <Stamp><time>14.04</time></Stamp>
          </Bubble>
          <Outgoing text="jadwal sholat jakarta" />
          <Bubble $wide>
            <Tail />
            <Body>
              <p>Jadwal Sholat Daerah Khusus<br />ibukota Jakarta hari ini:</p>
              <TimeList slots={JAKARTA} />
              <p>Waktu dalam zona waktu: Asia/<br />Jakarta</p>
            </Body>
            <Stamp><time>14.04</time></Stamp>
          </Bubble>
          <Outgoing text="waktu sholat di london" />
          <Bubble $wide>
            <Tail />
            <Body>
              <p>Jadwal Sholat London hari ini:</p>
              <TimeList slots={LONDON} />
            </Body>
          </Bubble>
        </Messages>

        <ScrollButton type="button" aria-label="Gulir ke bawah">
          <DoubleDownIcon />
        </ScrollButton>

        <Composer onSubmit={(e) => e.preventDefault()}>
          <InputPill>
            <IconButton type="button" aria-label="Stiker"><StickerIcon /></IconButton>
            <MessageInput type="text" placeholder="Ketik pesan" aria-label="Ketik pesan" />
            <PillActions>
              <IconButton type="button" aria-label="Lampirkan"><ClipIcon /></IconButton>
              <IconButton type="button" aria-label="Kamera"><CameraIcon /></IconButton>
            </PillActions>
          </InputPill>
          <MicButton type="button" aria-label="Pesan suara"><MicIcon /></MicButton>
        </Composer>
      </Chat>

      <NavBar>
        <IconButton type="button" aria-label="Menu"><MenuIcon /></IconButton>
        <IconButton type="button" aria-label="Beranda"><HomeIcon /></IconButton>
        <IconButton type="button" aria-label="Balik"><ReturnIcon /></IconButton>
      </NavBar>
    </Screen>
  );
}
